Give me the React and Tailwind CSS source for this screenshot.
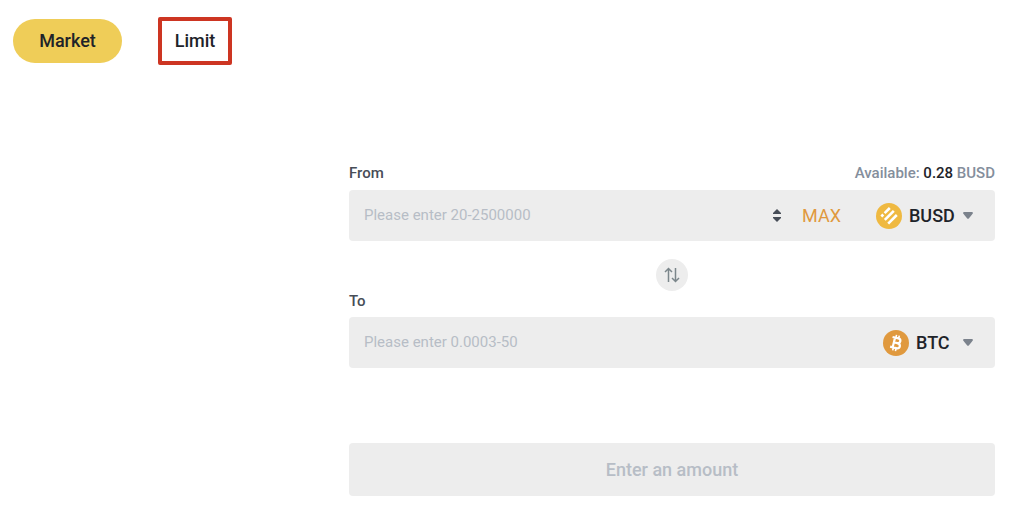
import { useState } from "react";

function BusdLogo() {
  return (
    <svg viewBox="0 0 26 26" className="size-[26px] shrink-0" aria-hidden="true">
      <circle cx="13" cy="13" r="13" fill="#efb941" />
      <g stroke="#fff" strokeWidth="2.6" fill="none">
        <path d="M8.6 10.2 L13.8 5" />
        <path d="M8.8 16.8 L17.8 7.8" />
        <path d="M12.2 20.6 L20.8 12" />
        <path d="M5.3 13.5 L7.3 11.5" />
      </g>
    </svg>
  );
}

function BtcLogo() {
  return (
    <svg viewBox="0 0 26 26" className="size-[26px] shrink-0" aria-hidden="true">
      <circle cx="13" cy="13" r="13" fill="#e0993e" />
      <g transform="rotate(14 13 13)" fill="none" stroke="#fff" strokeWidth="2.2">
        <path d="M8.2 8 H14.2 C17.6 8 17.6 12.8 14.2 12.8 H10.6 M14.2 12.8 C18.6 12.8 18.6 18 14.2 18 H8.2 M10.8 8 V18" />
        <path d="M11.6 5 V8 M14.4 5 V8 M11.6 18 V21 M14.4 18 V21" strokeWidth="1.6" />
      </g>
    </svg>
  );
}

function Caret() {
  return (
    <svg viewBox="0 0 10 7" className="pointer-events-none h-[7px] w-[10px] shrink-0" aria-hidden="true">
      <path d="M0.8 0 H9.2 Q10.4 0.6 9.6 1.7 L6 6.2 Q5 7.2 4 6.2 L0.4 1.7 Q-0.4 0.6 0.8 0 Z" fill="#7b828c" />
    </svg>
  );
}

function CoinSelect({ label, logo, coin, className }) {
  return (
    <div className="flex items-center">
      {logo}
      <select
        aria-label={label}
        defaultValue={coin}
        className={`ml-[7px] cursor-pointer appearance-none bg-transparent text-lg font-medium text-[#1e2329] outline-none ${className}`}
      >
        <option>{coin}</option>
      </select>
      <Caret />
    </div>
  );
}

function Stepper() {
  return (
    <div className="flex flex-col gap-[3px] text-[#474d57]">
      <button type="button" aria-label="Increase amount" className="block">
        <svg viewBox="0 0 8 5" className="h-[5px] w-2" aria-hidden="true">
          <path d="M4 0 L8 4 V5 H0 V4 Z" fill="currentColor" />
        </svg>
      </button>
      <button type="button" aria-label="Decrease amount" className="block">
        <svg viewBox="0 0 8 5" className="h-[5px] w-2" aria-hidden="true">
          <path d="M0 0 H8 V1 L4 5 L0 1 Z" fill="currentColor" />
        </svg>
      </button>
    </div>
  );
}

function AmountInput({ id, placeholder }) {
  const [value, setValue] = useState("");
  return (
    <input
      id={id}
      type="text"
      inputMode="decimal"
      value={value}
      onChange={(event) => setValue(event.target.value)}
      placeholder={placeholder}
      className="min-w-0 flex-1 bg-transparent text-[15px] text-[#1e2329] outline-none placeholder:text-[#b7bdc6]"
    />
  );
}

export default function App() {
  return (
    <main className="min-h-screen bg-white pb-6 font-['Roboto',sans-serif] text-[#1e2329]">
      <nav className="flex items-center gap-9 pt-[17px] pl-[13px] text-lg font-medium">
        <button type="button" className="h-11 w-[109px] rounded-full bg-[#efcd58]">
          Market
        </button>
        <button type="button" className="h-12 w-[74px] rounded-xs border-4 border-[#cd3522]">
          Limit
        </button>
      </nav>

      <form className="mt-[98px] mr-[29px] ml-auto flex max-w-[646px] flex-col" onSubmit={(event) => event.preventDefault()}>
        <div className="flex h-5 items-center justify-between text-[15px] font-medium">
          <label htmlFor="from-amount" className="text-[#474d57]">From</label>
          <p className="text-[#848e9c]">
            Available: <span className="text-[#1e2329]">0.28</span> BUSD
          </p>
        </div>
        <div className="mt-[7px] flex h-[51px] items-center rounded-sm bg-[#ededed] pr-[22px] pl-[15px]">
          <AmountInput id="from-amount" placeholder="Please enter 20-2500000" />
          <Stepper />
          <button type="button" className="w-[81px] text-lg text-[#e0993e]">MAX</button>
          <div className="ml-[14px]">
            <CoinSelect label="From coin" logo={<BusdLogo />} coin="BUSD" className="w-[54px]" />
          </div>
        </div>

        <button
          type="button"
          aria-label="Swap coins"
          className="mt-[18px] flex size-8 items-center justify-center self-center rounded-full bg-[#ededed]"
        >
          <svg viewBox="0 0 16 16" className="size-4" fill="none" stroke="#7b868b" strokeWidth="1.5" aria-hidden="true">
            <path d="M4.5 15 V1.5 M1 5 L4.5 1.5 L8 5" />
            <path d="M11.5 1 V14.5 M8 11 L11.5 14.5 L15 11" />
          </svg>
        </button>

        <label htmlFor="to-amount" className="h-5 self-start text-[15px] leading-5 font-medium text-[#474d57]">
          To
        </label>
        <div className="mt-[6px] flex h-[51px] items-center rounded-sm bg-[#ededed] pr-[22px] pl-[15px]">
          <AmountInput id="to-amount" placeholder="Please enter 0.0003-50" />
          <CoinSelect label="To coin" logo={<BtcLogo />} coin="BTC" className="w-[47px]" />
        </div>

        <button
          type="submit"
          disabled
          className="mt-[75px] h-[53px] rounded-sm bg-[#ededed] text-lg font-medium text-[#b7bdc6]"
        >
          Enter an amount
        </button>
      </form>
    </main>
  );
}
